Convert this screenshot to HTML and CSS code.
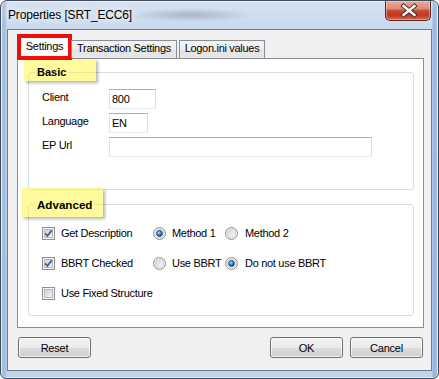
FILE: index.html
```html
<!DOCTYPE html>
<html>
<head>
<meta charset="utf-8">
<title>Properties [SRT_ECC6]</title>
<link rel="stylesheet" href="styles.css">
</head>
<body>
<div class="window">
  <div class="titlebar">
    <span class="title">Properties [SRT_ECC6]</span>
    <div class="close">
      <svg width="46" height="19" viewBox="0 0 46 19">
        <path d="M17.5 5 L28.5 14 M28.5 5 L17.5 14" stroke="#3b2a28" stroke-width="4.2" stroke-linecap="square" fill="none"/>
        <path d="M17.5 5 L28.5 14 M28.5 5 L17.5 14" stroke="#ffffff" stroke-width="2.4" stroke-linecap="square" fill="none"/>
      </svg>
    </div>
  </div>
  <div class="client">
    <div class="tabs">
      <div class="tab active">Settings</div>
      <div class="tab tab-trans">Transaction Settings</div>
      <div class="tab tab-logon">Logon.ini values</div>
    </div>
    <div class="panel">
      <div class="callout callout-basic"></div>
      <div class="callout callout-adv"></div>
      <fieldset class="group group-basic">
        <legend>Basic</legend>
        <div class="field">
          <label>Client</label>
          <input class="text w-client" type="text" value="800" readonly>
        </div>
        <div class="field">
          <label>Language</label>
          <input class="text w-lang" type="text" value="EN" readonly>
        </div>
        <div class="field">
          <label>EP Url</label>
          <input class="text w-url" type="text" value="" readonly>
        </div>
      </fieldset>
      <fieldset class="group group-adv">
        <legend class="legend-adv">Advanced</legend>
        <div class="opt-row">
          <div class="check">
            <svg class="box" width="13" height="13" viewBox="0 0 13 13">
              <defs><linearGradient id="cg1" x1="0" y1="0" x2="1" y2="1"><stop offset="0" stop-color="#c9cdd3"/><stop offset="1" stop-color="#f7f7f7"/></linearGradient></defs>
              <rect x="0.5" y="0.5" width="12" height="12" fill="#f6f6f6" stroke="#8e8f8f"/>
              <rect x="2.5" y="2.5" width="8" height="8" fill="url(#cg1)" stroke="#b4b8be"/>
              <path d="M3.2 6.4 L5.4 8.8 L9.8 3.4" fill="none" stroke="#4b5e96" stroke-width="1.8"/>
            </svg>
            <span>Get Description</span>
          </div>
          <div class="ropt ropt1">
            <svg class="radio" width="13" height="13" viewBox="0 0 13 13">
              <defs>
                <linearGradient id="rg1" x1="0" y1="0" x2="1" y2="1"><stop offset="0" stop-color="#d2d5da"/><stop offset="1" stop-color="#fafafa"/></linearGradient>
                <radialGradient id="rd1" cx="0.4" cy="0.35" r="0.7"><stop offset="0" stop-color="#a6e1fb"/><stop offset="0.55" stop-color="#2f80c8"/><stop offset="1" stop-color="#163f78"/></radialGradient>
              </defs>
              <circle cx="6.5" cy="6.5" r="6" fill="#f4f4f4" stroke="#8e8f8f"/>
              <circle cx="6.5" cy="6.5" r="4.3" fill="url(#rg1)" stroke="#c2c5ca" stroke-width="0.8"/>
              <circle cx="6.5" cy="6.5" r="2.9" fill="url(#rd1)" stroke="#1b3a66" stroke-width="0.7"/>
            </svg>
            <span>Method 1</span>
          </div>
          <div class="ropt ropt2">
            <svg class="radio" width="13" height="13" viewBox="0 0 13 13">
              <defs><linearGradient id="rg2" x1="0" y1="0" x2="1" y2="1"><stop offset="0" stop-color="#d2d5da"/><stop offset="1" stop-color="#fafafa"/></linearGradient></defs>
              <circle cx="6.5" cy="6.5" r="6" fill="#f4f4f4" stroke="#8e8f8f"/>
              <circle cx="6.5" cy="6.5" r="4.3" fill="url(#rg2)" stroke="#c2c5ca" stroke-width="0.8"/>
            </svg>
            <span>Method 2</span>
          </div>
        </div>
        <div class="opt-row">
          <div class="check">
            <svg class="box" width="13" height="13" viewBox="0 0 13 13">
              <defs><linearGradient id="cg2" x1="0" y1="0" x2="1" y2="1"><stop offset="0" stop-color="#c9cdd3"/><stop offset="1" stop-color="#f7f7f7"/></linearGradient></defs>
              <rect x="0.5" y="0.5" width="12" height="12" fill="#f6f6f6" stroke="#8e8f8f"/>
              <rect x="2.5" y="2.5" width="8" height="8" fill="url(#cg2)" stroke="#b4b8be"/>
              <path d="M3.2 6.4 L5.4 8.8 L9.8 3.4" fill="none" stroke="#4b5e96" stroke-width="1.8"/>
            </svg>
            <span>BBRT Checked</span>
          </div>
          <div class="ropt ropt1">
            <svg class="radio" width="13" height="13" viewBox="0 0 13 13">
              <defs><linearGradient id="rg3" x1="0" y1="0" x2="1" y2="1"><stop offset="0" stop-color="#d2d5da"/><stop offset="1" stop-color="#fafafa"/></linearGradient></defs>
              <circle cx="6.5" cy="6.5" r="6" fill="#f4f4f4" stroke="#8e8f8f"/>
              <circle cx="6.5" cy="6.5" r="4.3" fill="url(#rg3)" stroke="#c2c5ca" stroke-width="0.8"/>
            </svg>
            <span>Use BBRT</span>
          </div>
          <div class="ropt ropt2">
            <svg class="radio" width="13" height="13" viewBox="0 0 13 13">
              <defs>
                <linearGradient id="rg4" x1="0" y1="0" x2="1" y2="1"><stop offset="0" stop-color="#d2d5da"/><stop offset="1" stop-color="#fafafa"/></linearGradient>
                <radialGradient id="rd4" cx="0.4" cy="0.35" r="0.7"><stop offset="0" stop-color="#a6e1fb"/><stop offset="0.55" stop-color="#2f80c8"/><stop offset="1" stop-color="#163f78"/></radialGradient>
              </defs>
              <circle cx="6.5" cy="6.5" r="6" fill="#f4f4f4" stroke="#8e8f8f"/>
              <circle cx="6.5" cy="6.5" r="4.3" fill="url(#rg4)" stroke="#c2c5ca" stroke-width="0.8"/>
              <circle cx="6.5" cy="6.5" r="2.9" fill="url(#rd4)" stroke="#1b3a66" stroke-width="0.7"/>
            </svg>
            <span>Do not use BBRT</span>
          </div>
        </div>
        <div class="opt-row">
          <div class="check">
            <svg class="box" width="13" height="13" viewBox="0 0 13 13">
              <defs><linearGradient id="cg3" x1="0" y1="0" x2="1" y2="1"><stop offset="0" stop-color="#c9cdd3"/><stop offset="1" stop-color="#f7f7f7"/></linearGradient></defs>
              <rect x="0.5" y="0.5" width="12" height="12" fill="#f6f6f6" stroke="#8e8f8f"/>
              <rect x="2.5" y="2.5" width="8" height="8" fill="url(#cg3)" stroke="#b4b8be"/>
            </svg>
            <span class="nowrap">Use Fixed Structure</span>
          </div>
        </div>
      </fieldset>
    </div>
    <div class="buttons">
      <button class="btn">Reset</button>
      <span class="spacer"></span>
      <button class="btn">OK</button>
      <button class="btn btn-cancel">Cancel</button>
    </div>
  </div>
</div>
</body>
</html>
```

FILE: styles.css
```css
* { box-sizing: border-box; }
html, body { margin: 0; padding: 0; background: #ffffff; }
body {
  font-family: "Liberation Sans", Arial, sans-serif;
  font-size: 11px;
  color: #000;
}

.window {
  width: 439px;
  height: 379px;
  border: 1px solid #414c5a;
  border-radius: 7px 7px 6px 6px;
  overflow: hidden;
  display: flex;
  flex-direction: column;
  background:
    linear-gradient(to right, rgba(255,255,255,0) 0, rgba(120,160,215,0.45) 2px, rgba(120,160,215,0.45) 4px, rgba(255,255,255,0) 6px, rgba(255,255,255,0) 431px, rgba(110,155,215,0.5) 432px, rgba(110,155,215,0.5) 435px, rgba(255,255,255,0) 437px),
    linear-gradient(to bottom, #d6e2f1 0, #c8d9ee 30px, #bfd3ec 100%);
  box-shadow: inset 0 0 0 1px rgba(255,255,255,0.55);
}

.titlebar {
  height: 28px;
  flex: none;
  display: flex;
  align-items: flex-start;
  justify-content: space-between;
  padding-left: 7px;
  padding-right: 7px;
  background:
    radial-gradient(ellipse 62px 7px at 190px 14px, rgba(120,132,150,0.45), rgba(120,132,150,0));
}

.title {
  margin-top: 7px;
  font-size: 12px;
  line-height: 14px;
  letter-spacing: -0.15px;
  color: #000;
  text-shadow: 0 0 6px rgba(255,255,255,0.95), 0 0 10px rgba(255,255,255,0.9);
}

.close {
  width: 46px;
  height: 20px;
  border: 1px solid #5a2a22;
  border-top: none;
  border-radius: 0 0 5px 5px;
  background: linear-gradient(to bottom, #e9ab9c 0, #dd8a77 40%, #c8472e 52%, #bf3a20 75%, #d76a4e 100%);
  box-shadow: inset 0 0 0 1px rgba(255,220,210,0.45);
}
.close svg { display: block; }

.client {
  margin: 0 6px;
  height: 342px;
  flex: none;
  border: 1px solid #6f7c8c;
  background: #f0f0f0;
  padding: 0 7px 0 9px;
  display: flex;
  flex-direction: column;
}

.tabs {
  height: 28px;
  flex: none;
  display: flex;
  align-items: flex-end;
  padding-left: 1px;
  position: relative;
  z-index: 3;
}

.tab {
  height: 18px;
  border: 1px solid #898c95;
  border-bottom: none;
  background: linear-gradient(to bottom, #f4f4f4 0, #ececec 50%, #e2e2e2 51%, #e8e8e8 100%);
  line-height: 13px;
  padding-top: 1px;
  text-align: center;
  letter-spacing: -0.3px;
  white-space: nowrap;
}
.tab.active {
  width: 53px;
  height: 24px;
  margin-bottom: -1px;
  background: #ffffff;
  padding-top: 4px;
  outline: 4px solid #f20d0d;
  outline-offset: -3px;
}
.tab-trans { width: 106px; }
.tab-logon { width: 86px; margin-left: 2px; }

.panel {
  position: relative;
  height: 270px;
  flex: none;
  border: 1px solid #898c95;
  background: #ffffff;
  padding: 0 9px 0 10px;
}

.callout {
  position: absolute;
  background: rgba(255, 247, 60, 0.5);
  box-shadow: 2px 2px 3px rgba(0, 0, 0, 0.3);
  z-index: 1;
}
.callout-basic { left: 6px; top: 0; width: 72px; height: 22px; }
.callout-adv { left: 4px; top: 129px; width: 81px; height: 29px; }

.group {
  margin: 7px 0 0;
  padding: 10px 0 0 0;
  border: 1px solid #d5dfe5;
  border-radius: 3px;
  min-width: 0;
}
.group-basic { height: 124px; }
.group-adv { height: 118px; margin-top: 8px; padding-top: 13px; }

.group legend {
  margin-left: 6px;
  padding: 0 2px;
  font-weight: bold;
  line-height: 13px;
  position: relative;
  z-index: 2;
}
.group legend.legend-adv { font-size: 11.6px; }

.field {
  display: flex;
  align-items: flex-start;
  margin-left: 13px;
  height: 20px;
  margin-bottom: 4px;
}
.field label {
  width: 67px;
  padding-top: 2px;
  line-height: 13px;
  letter-spacing: -0.3px;
}
.text {
  -webkit-appearance: none;
  appearance: none;
  height: 20px;
  margin: 0;
  padding: 0 2px;
  border: 1px solid;
  border-color: #abadb3 #dbdfe6 #e3e9ef #e2e3ea;
  border-radius: 0;
  background: #ffffff;
  font-family: inherit;
  font-size: 11px;
  line-height: 18px;
  letter-spacing: -0.3px;
  color: #000;
  outline: none;
}
.w-client { width: 47px; }
.w-lang { width: 39px; }
.w-url { width: 263px; }

.opt-row {
  display: flex;
  align-items: center;
  margin-left: 13px;
  height: 18px;
  margin-bottom: 12px;
  line-height: 13px;
  letter-spacing: -0.3px;
  white-space: nowrap;
}
.check { display: flex; align-items: center; width: 111px; }
.box { flex: none; display: block; margin-right: 6px; }
.ropt { display: flex; align-items: center; }
.ropt1 { width: 72px; }
.radio { flex: none; display: block; margin-right: 6px; }
.ropt2 .radio { margin-right: 7px; }

.buttons {
  display: flex;
  margin-top: 9px;
  padding-left: 1px;
  padding-right: 1px;
}
.spacer { flex: 1; }
.btn {
  width: 73px;
  height: 21px;
  margin: 0;
  padding: 0;
  border: 1px solid #707070;
  border-radius: 3px;
  background: linear-gradient(to bottom, #f2f2f2 0, #ebebeb 50%, #dddddd 51%, #cfcfcf 100%);
  box-shadow: inset 0 0 0 1px rgba(255,255,255,0.7);
  font-family: inherit;
  font-size: 11px;
  letter-spacing: -0.2px;
  color: #000;
}
.btn-cancel { margin-left: 7px; }
```
